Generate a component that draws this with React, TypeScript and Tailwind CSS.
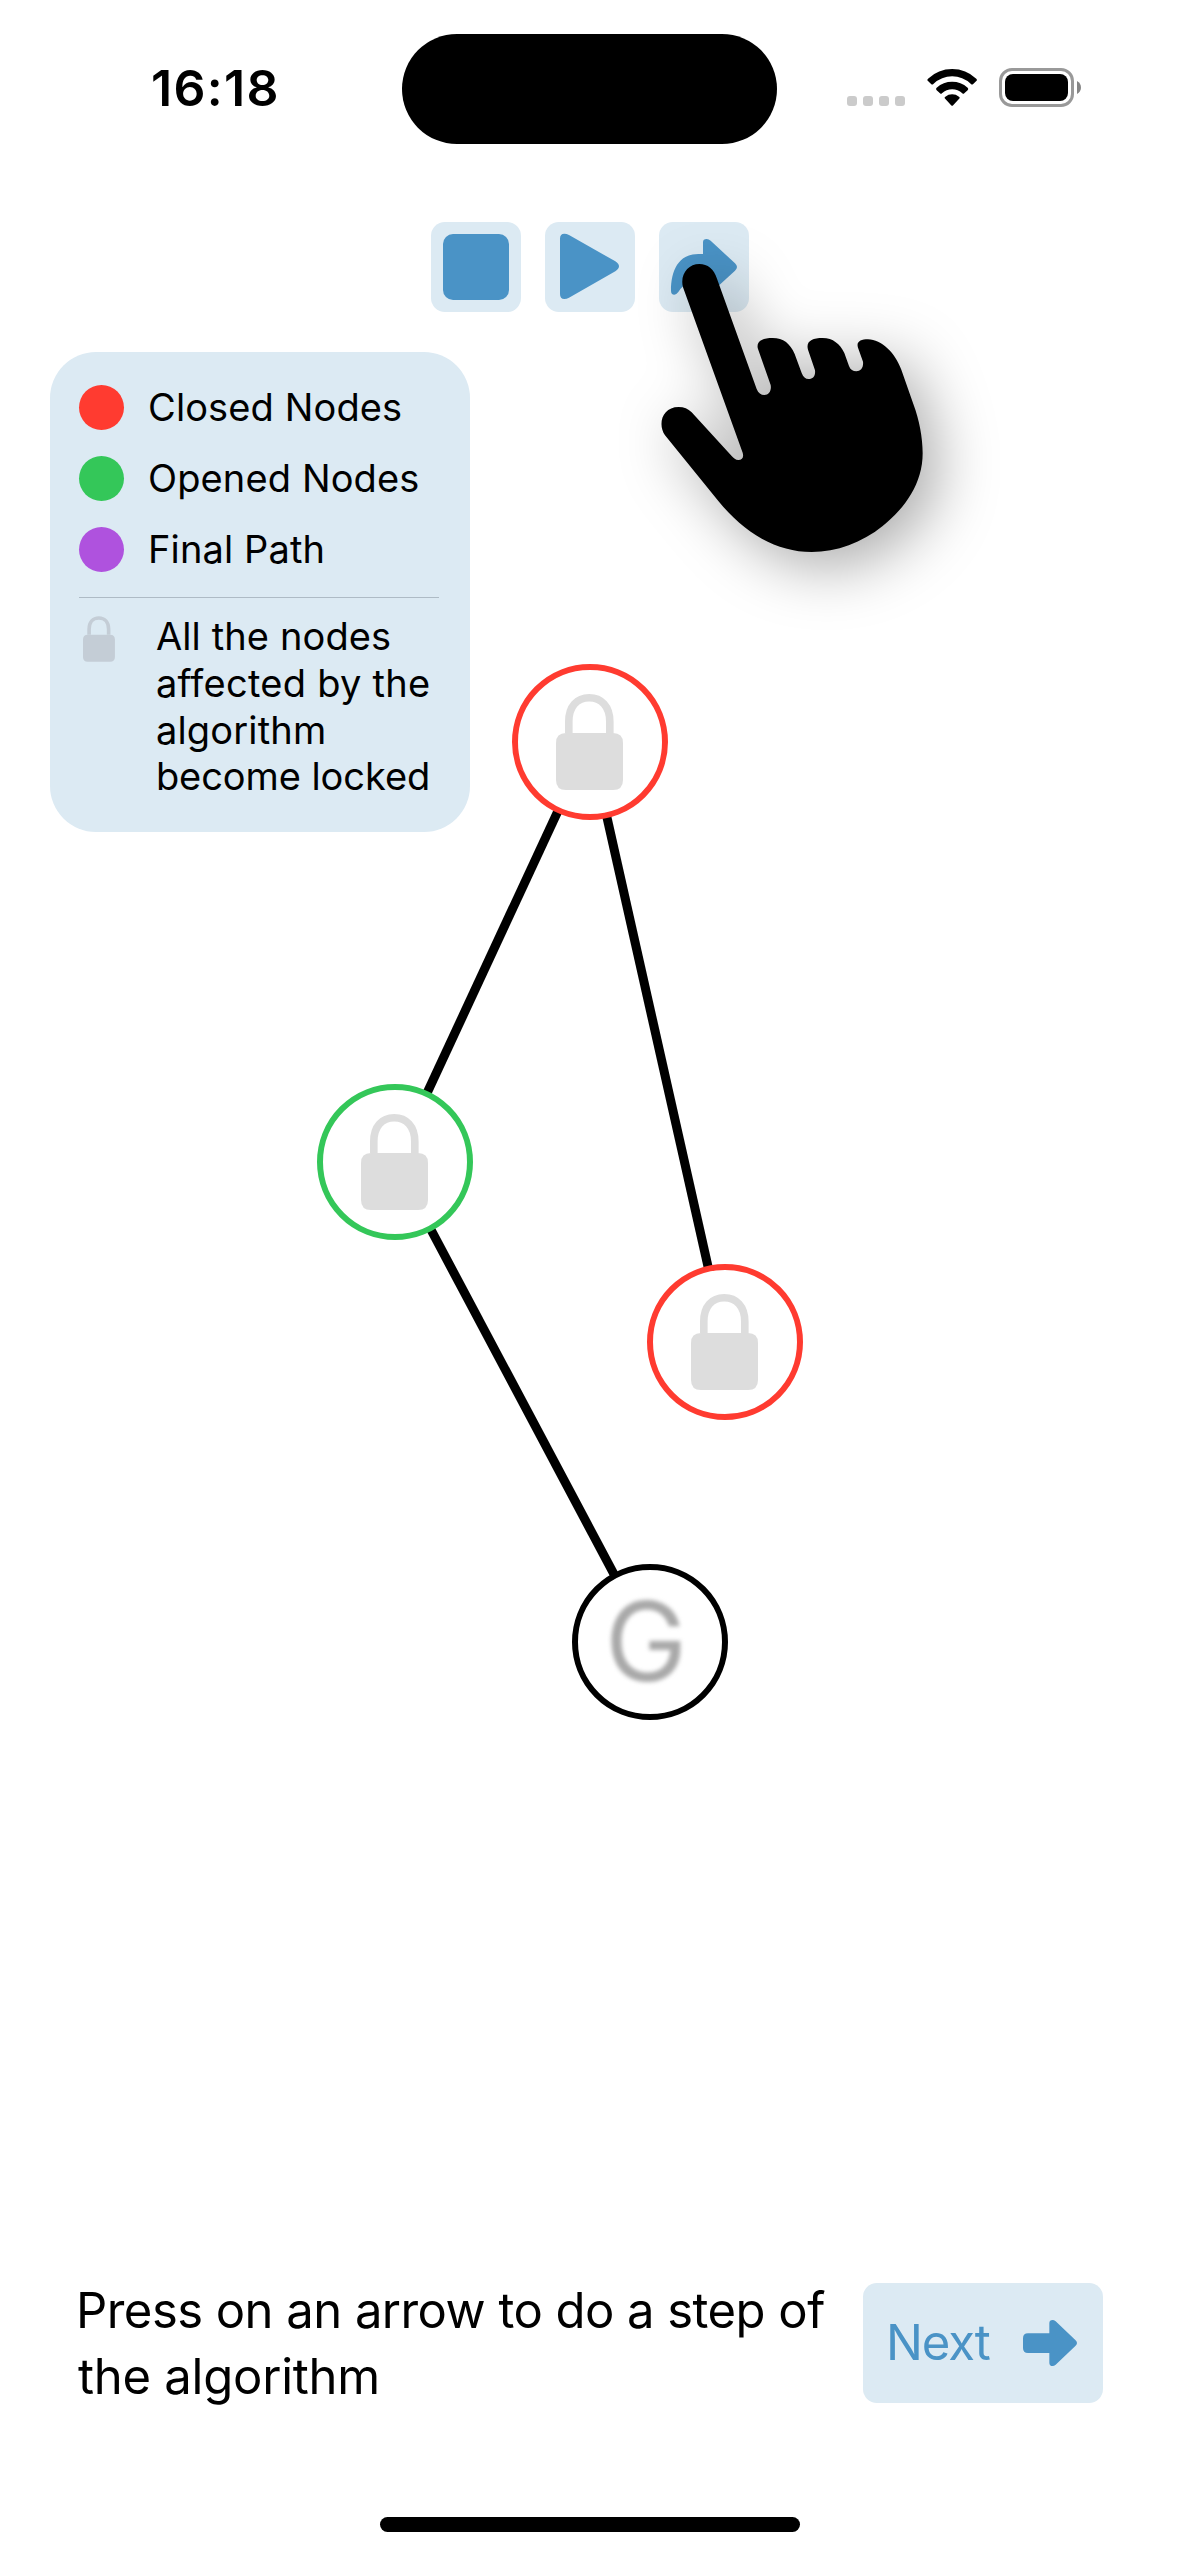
import type { ReactNode } from "react";

type Point = { x: number; y: number };

const START: Point = { x: 590, y: 742 };
const LEFT: Point = { x: 395, y: 1162 };
const RIGHT: Point = { x: 725, y: 1342 };
const GOAL: Point = { x: 650, y: 1642 };

const EDGES: [Point, Point][] = [
  [START, LEFT],
  [START, RIGHT],
  [LEFT, GOAL],
];

const LEGEND = [
  { label: "Closed Nodes", dot: "bg-[#ff3b30]" },
  { label: "Opened Nodes", dot: "bg-[#34c759]" },
  { label: "Final Path", dot: "bg-[#af52de]" },
];

function LockIcon({ className }: { className: string }) {
  return (
    <svg viewBox="0 0 67 96" className={className} aria-hidden="true">
      <path
        d="M12.8 39V27.5C12.8 12.5 21 3.8 33.2 3.8S53.8 12.5 53.8 27.5V39"
        fill="none"
        stroke="currentColor"
        strokeWidth="7.6"
      />
      <path
        d="M10 39H57Q67 39 67 49V86Q67 96 57 96H10Q0 96 0 86V49Q0 39 10 39Z"
        fill="currentColor"
      />
    </svg>
  );
}

function StatusBar() {
  return (
    <header className="relative flex h-[177px] shrink-0 items-start">
      <time className="ml-[151px] mt-[58px] text-[50px] font-semibold leading-[60px] tracking-[1.3px]">16:18</time>
      <div className="absolute left-[402px] top-[34px] h-[110px] w-[375px] rounded-full bg-black" />
      <div className="ml-auto mr-[98px] mt-[68px] flex h-[39px]">
        <div className="mr-[22px] mt-[28px] flex gap-[6px]">
          {[0, 1, 2, 3].map((i) => (
            <span key={i} className="size-[10px] rounded-[3px] bg-[#cbcbcb]" />
          ))}
        </div>
        <svg viewBox="0 0 151 112" className="mr-[22px] mt-px h-[37.3px] w-[50.3px]" aria-hidden="true">
          <path d="M3 36Q-1 33 3 29Q34 0 75.500 0T148 29Q152 33 148 36L138 45.500Q135 48 132 45Q107 22 75.500 22T19 45Q16 48 13 45.500Z" />
          <path d="M29 64Q25 60 29 56Q49 38 75.500 38T122 56Q126 60 122 64L112 73Q109 76 106 73Q93 60.500 75.500 60.500T45 73Q42 76 39 73Z" />
          <path d="M54.500 89Q51 86 55 83Q64 76 75.500 76T96 83Q100 86 96.500 89L78.500 108.500Q75.500 112 72.500 108.500Z" />
        </svg>
        <div className="h-[39px] w-[75px] rounded-[13px] border-[3px] border-[#999] p-[3px]">
          <div className="h-[27px] w-[63px] rounded-[8px] bg-black" />
        </div>
        <svg viewBox="0 0 4 13" className="ml-[3px] mt-[13px] h-[13px] w-1" aria-hidden="true">
          <path d="M0 0C5.300 2.500 5.300 10.500 0 13Z" fill="#858585" />
        </svg>
      </div>
    </header>
  );
}

function ToolButton({ label, children }: { label: string; children: ReactNode }) {
  return (
    <button
      aria-label={label}
      className="flex size-[90px] items-center justify-center rounded-[14px] bg-[#dceaf3] text-[#4a93c6]"
    >
      <svg viewBox="0 0 270 270" className="size-[90px]" fill="currentColor" aria-hidden="true">
        {children}
      </svg>
    </button>
  );
}

function Toolbar() {
  return (
    <nav className="mt-[45px] flex justify-center gap-6">
      <ToolButton label="Stop">
        <rect x="36" y="36" width="198" height="198" rx="30" />
      </ToolButton>
      <ToolButton label="Play">
        <path d="M45 50Q45 35 58 35Q65 35 72 39L211 118Q222 125 222 133Q222 141 211 148L72 227Q65 231 58 231Q45 231 45 216Z" />
      </ToolButton>
      <ToolButton label="Step">
        <path d="M132 96V61Q132 51 143 51Q149 51 155 56L228 124Q234 130 234 135Q234 140 228 146L155 213Q149 218 143 218Q132 218 132 208V172Q82 172 58 210Q52 218 46 218Q36 218 36 206C36 148 57 96 118 96Z" />
      </ToolButton>
    </nav>
  );
}

function Legend() {
  return (
    <section className="relative ml-[50px] mt-10 h-[480px] w-[420px] rounded-[46px] bg-[#dceaf3] pl-[29px] pr-[31px] pt-[33px]">
      <ul className="flex flex-col gap-[26px]">
        {LEGEND.map(({ label, dot }) => (
          <li key={label} className="flex h-[45px] gap-[24px]">
            <span className={`size-[45px] rounded-full ${dot}`} />
            <span className="text-[38px] leading-[45px] tracking-[0.12px]">{label}</span>
          </li>
        ))}
      </ul>
      <hr className="mt-[25px] border-t border-[#aebbc5]" />
      <div className="mt-[15px] flex pl-1">
        <LockIcon className="mt-[3px] h-[46px] w-8 text-[#c4cdd6]" />
        <p className="ml-[41px] w-[284px] whitespace-nowrap text-[38px] leading-[46.8px]">
          <span className="tracking-[0.12px]">All the nodes</span>
          <br />
          <span className="tracking-[0.27px]">affected by the</span>
          <br />
          <span className="tracking-[0.17px]">algorithm</span>
          <br />
          <span className="tracking-[-0.07px]">become locked</span>
        </p>
      </div>
    </section>
  );
}

function GraphNode({ at, color, children }: { at: Point; color: string; children: ReactNode }) {
  return (
    <div
      className={`absolute flex size-[156px] items-center justify-center rounded-full border-[6px] bg-white ${color}`}
      style={{ left: at.x - 78, top: at.y - 78 }}
    >
      {children}
    </div>
  );
}

function Graph() {
  const lock = <LockIcon className="mr-[1px] h-24 w-[67px] text-[#ddd]" />;
  return (
    <div className="absolute inset-0">
      <svg viewBox="0 0 1179 2556" className="absolute inset-0 size-full" aria-hidden="true">
        {EDGES.map(([a, b], i) => (
          <line key={i} x1={a.x} y1={a.y} x2={b.x} y2={b.y} stroke="black" strokeWidth="9" />
        ))}
      </svg>
      <GraphNode at={START} color="border-[#ff3b30]">{lock}</GraphNode>
      <GraphNode at={LEFT} color="border-[#34c759]">{lock}</GraphNode>
      <GraphNode at={RIGHT} color="border-[#ff3b30]">{lock}</GraphNode>
      <GraphNode at={GOAL} color="border-black">
        <span className="mb-[2px] mr-[8px] text-[110px] leading-[144px] text-[#a9a9a9] blur-[2px]">G</span>
      </GraphNode>
    </div>
  );
}

function PointingHand() {
  return (
    <svg
      viewBox="0 0 1080 1200"
      className="absolute left-[630px] top-[200px] h-[400px] w-[360px] overflow-visible drop-shadow-[15px_15px_30px_rgba(0,0,0,0.33)]"
      aria-hidden="true"
    >
      <path d="M159 262C149 224 174 192 208 192C233 192 252 207 261 236L380 567C385 579 393 585 403 585C417 585 425 572 422 555L384 447C377 424 397 414 428 414C460 414 481 431 494 462L515 519C520 531 526 537 536 537C549 537 557 527 555 511L534 449C527 424 546 414 578 414C609 414 630 432 643 459L657 498C661 509 669 514 679 514C692 514 701 504 699 485L684 443C678 425 692 418 714 418C755 419 795 458 814 509L850 612C868 660 878 713 878 760C878 849 827 923 758 978C696 1028 620 1056 545 1056C440 1056 345 1001 265 903L105 706C82 672 97 621 146 621C162 621 174 626 185 637L305 768C311 775 317 780 325 780C337 780 342 771 338 758Z" />
    </svg>
  );
}

export default function App() {
  return (
    <main className="relative flex h-[2556px] w-[1179px] flex-col overflow-hidden bg-white font-[Inter,sans-serif] text-black">
      <StatusBar />
      <Graph />
      <Toolbar />
      <Legend />
      <PointingHand />
      <footer className="relative mt-auto">
        <div className="flex h-[132px] items-start pl-[76px]">
          <p className="w-[787px] whitespace-nowrap text-[49px] leading-[66px]">
            <span className="tracking-[-0.54px]">Press on an arrow to do a step of</span>
            <br />
            <span className="ml-[2px] tracking-[-0.25px]">the algorithm</span>
          </p>
          <button className="mt-[5px] flex h-[120px] w-[240px] items-center justify-between rounded-[14px] bg-[#dceaf3] pl-[23px] pr-[26px] text-[#4a93c6]">
            <span className="text-[49px] leading-[60px] tracking-[-1.1px]">Next</span>
            <svg viewBox="0 0 162 138" className="h-[46px] w-[54px]" fill="currentColor" aria-hidden="true">
              <path d="M79 40V10Q79 0 89 0Q93 0 98 4L157 60Q162 65 162 69Q162 73 157 78L98 134Q93 138 89 138Q79 138 79 128V99H15Q0 99 0 84V55Q0 40 15 40Z" />
            </svg>
          </button>
        </div>
        <div className="mx-auto mb-6 mt-[107px] h-[15px] w-[420px] rounded-full bg-black" />
      </footer>
    </main>
  );
}
